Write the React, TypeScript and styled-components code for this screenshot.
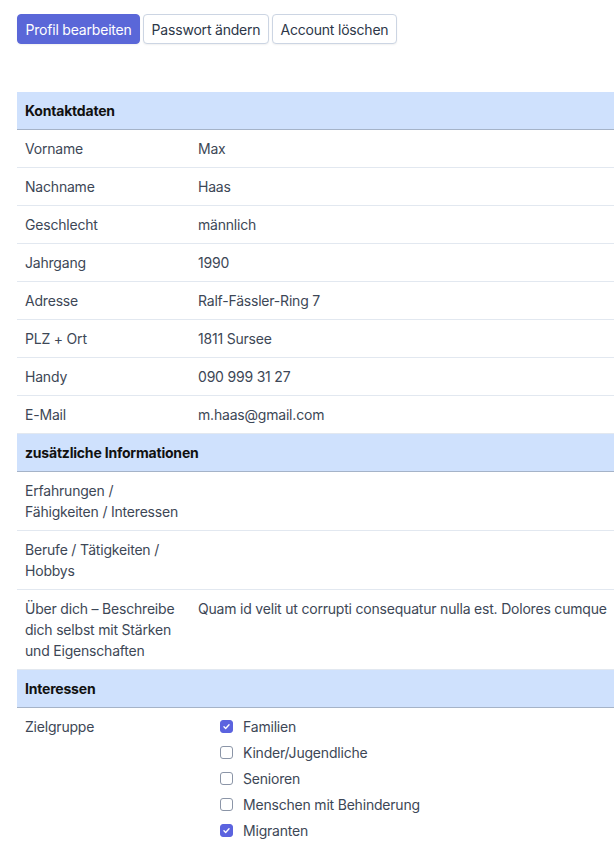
import React from "react";
import styled, { createGlobalStyle } from "styled-components";

const Global = createGlobalStyle`
  html, body { margin: 0; padding: 0; background: #fff; }
  body { font-family: Inter, "Noto Sans", sans-serif; font-size: 14px; letter-spacing: -0.2px; color: #3d4756; overflow: hidden; }
  * { box-sizing: border-box; }
`;

const Page = styled.div`
  padding: 14px 0 0 17px;
  width: 614px;
  overflow: hidden;
`;

const Toolbar = styled.div`
  display: flex;
  gap: 3px;
  margin-bottom: 48px;
`;

const Button = styled.button<{ $primary?: boolean }>`
  font-family: inherit;
  font-size: 14px;
  letter-spacing: -0.2px;
  height: 30px;
  padding: 0 7.5px;
  border-radius: 4px;
  border: 1px solid ${(p) => (p.$primary ? "#5a67d8" : "#ccd5e3")};
  background: ${(p) => (p.$primary ? "#5a67d8" : "#fff")};
  color: ${(p) => (p.$primary ? "#fff" : "#2d3748")};
  box-shadow: 0 1px 2px rgba(0, 0, 0, 0.06);
  cursor: pointer;
`;

const Table = styled.div`
  width: 100%;
`;

const SectionHead = styled.div`
  background: #cfe1fd;
  border-bottom: 1px solid #a5b3c8;
  padding: 8px;
  line-height: 21px;
  font-weight: 700;
  color: #111;
`;

const Row = styled.div`
  display: grid;
  grid-template-columns: 173px max-content;
  border-bottom: 1px solid #e2e8f0;
  line-height: 21px;
`;

const Label = styled.div`
  padding: 8px;
`;

const Value = styled.div`
  padding: 8px;
  white-space: nowrap;
`;

const CheckList = styled.div`
  padding: 8px 8px 10px 30px;
  display: flex;
  flex-direction: column;
  gap: 5px;
`;

const CheckItem = styled.label`
  display: flex;
  align-items: center;
  gap: 10px;
  line-height: 21px;
`;

const Box = styled.span<{ $checked?: boolean }>`
  width: 13px;
  height: 13px;
  border-radius: 3px;
  display: inline-flex;
  align-items: center;
  justify-content: center;
  background: ${(p) => (p.$checked ? "#5b63df" : "#fff")};
  border: 1px solid ${(p) => (p.$checked ? "#5b63df" : "#8b95a7")};
`;

const rows1: [string, string][] = [
  ["Vorname", "Max"],
  ["Nachname", "Haas"],
  ["Geschlecht", "männlich"],
  ["Jahrgang", "1990"],
  ["Adresse", "Ralf-Fässler-Ring 7"],
  ["PLZ + Ort", "1811 Sursee"],
  ["Handy", "090 999 31 27"],
  ["E-Mail", "m.haas@gmail.com"],
];

const rows2: [string, string][] = [
  ["Erfahrungen / Fähigkeiten / Interessen", ""],
  ["Berufe / Tätigkeiten / Hobbys", ""],
  [
    "Über dich – Beschreibe dich selbst mit Stärken und Eigenschaften",
    "Quam id velit ut corrupti consequatur nulla est. Dolores cumque",
  ],
];

const checks: [string, boolean][] = [
  ["Familien", true],
  ["Kinder/Jugendliche", false],
  ["Senioren", false],
  ["Menschen mit Behinderung", false],
  ["Migranten", true],
];

const Check = ({ on }: { on: boolean }) => (
  <Box $checked={on}>
    {on && (
      <svg width="9" height="9" viewBox="0 0 16 16" fill="none">
        <path d="M3.5 8.5l3 3 6-6.5" stroke="#fff" strokeWidth="2.4" strokeLinecap="round" strokeLinejoin="round" />
      </svg>
    )}
  </Box>
);

export default function App() {
  return (
    <>
      <Global />
      <Page>
        <Toolbar>
          <Button $primary>Profil bearbeiten</Button>
          <Button>Passwort ändern</Button>
          <Button>Account löschen</Button>
        </Toolbar>
        <Table>
          <SectionHead>Kontaktdaten</SectionHead>
          {rows1.map(([l, v]) => (
            <Row key={l}>
              <Label>{l}</Label>
              <Value>{v}</Value>
            </Row>
          ))}
          <SectionHead>zusätzliche Informationen</SectionHead>
          {rows2.map(([l, v]) => (
            <Row key={l}>
              <Label>{l}</Label>
              <Value>{v}</Value>
            </Row>
          ))}
          <SectionHead>Interessen</SectionHead>
          <Row>
            <Label>Zielgruppe</Label>
            <CheckList>
              {checks.map(([t, on]) => (
                <CheckItem key={t}>
                  <Check on={on} />
                  {t}
                </CheckItem>
              ))}
            </CheckList>
          </Row>
        </Table>
      </Page>
    </>
  );
}
